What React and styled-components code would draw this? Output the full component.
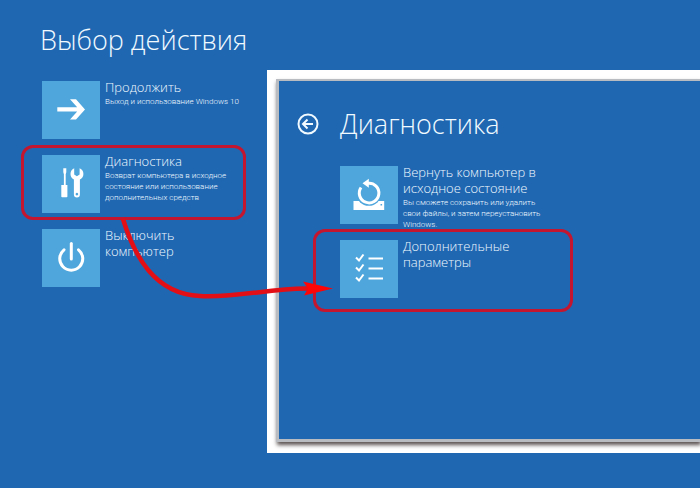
import React from 'react'
import styled, { createGlobalStyle } from 'styled-components'

const GlobalStyle = createGlobalStyle`
  * {
    box-sizing: border-box;
  }
  body {
    margin: 0;
    background: #2067b2;
    color: #f0faff;
    font-family: "Open Sans", "Noto Sans", sans-serif;
  }
`

const Page = styled.div`
  position: relative;
  display: flex;
  align-items: flex-start;
  min-height: 100vh;
  overflow: hidden;
`

const Actions = styled.main`
  flex: 0 0 267px;
  min-width: 0;
  padding: 20px 0 0 42px;
`

const Title = styled.h1`
  margin: 0 0 0 -2px;
  font-size: 27px;
  line-height: 40px;
  font-weight: 300;
  white-space: nowrap;
`

const Options = styled.div`
  display: flex;
  flex-direction: column;
  gap: 16px;
  margin-top: ${(props) => props.$top};
`

const Option = styled.button`
  position: relative;
  display: flex;
  align-items: flex-start;
  gap: 5px;
  width: 200px;
  height: 58px;
  padding: 0;
  border: 0;
  background: none;
  color: inherit;
  font-family: inherit;
  text-align: left;
  cursor: pointer;
`

const Tile = styled.span`
  flex: 0 0 58px;
  height: 58px;
  background: #4ea6dc;

  svg {
    display: block;
  }
`

const Text = styled.span`
  display: flex;
  flex-direction: column;
  margin-top: -2px;
  white-space: pre;
`

const Name = styled.span`
  font-size: 13px;
  line-height: 16px;
  font-weight: 300;
`

const Note = styled.span`
  margin-top: 1px;
  font-family: Roboto, "Open Sans", sans-serif;
  font-size: 8px;
  line-height: 11px;
  font-weight: 300;
`

const Frame = styled.span`
  position: absolute;
  inset: ${(props) => props.$inset};
  border: 3px solid #c4162e;
  border-radius: 12px;
  pointer-events: none;
`

const Sheet = styled.section`
  flex: 1;
  min-width: 0;
  margin-top: 70px;
  padding: 9px 0 11px 9px;
  background: #fff;
`

const Screen = styled.div`
  min-height: 363px;
  padding: 23px 0 0 18px;
  border: solid #b9bcc0;
  border-width: 2px 0 3px 3px;
  background: #2067b2;
  box-shadow: 1px 3px 4px #5a5050;
`

const Heading = styled.div`
  display: flex;
  align-items: center;
  gap: 23px;
`

const Back = styled.button`
  display: block;
  width: 22px;
  height: 22px;
  padding: 0;
  border: 0;
  background: none;
  color: inherit;
  cursor: pointer;

  svg {
    display: block;
  }
`

const Indent = styled.div`
  padding-left: 43px;
`

const Arrow = styled.svg`
  position: absolute;
  top: 0;
  left: 0;
  pointer-events: none;
`

const ContinueIcon = () => (
  <svg width="58" height="58" fill="#fff">
    <path d="M28 18.300h6L43 28.400L34 38.500H28L35.200 30.500H15.300V26.300H35.200z" />
  </svg>
)

const ToolsIcon = () => (
  <svg width="58" height="58" fill="#fff">
    <path d="M21.300 13.300h3v4l-.6 2V30h1.700v11.500q0 .8-.8.800h-4.500q-.8 0-.8-.8V30h2.600V19.300l-.6-2z" />
    <path
      fillRule="evenodd"
      d="M32.200 13.300v6.200l2.700 1.800l2.700-1.800v-6.200q3.800 1.700 3.800 5.700q0 3.600-3.500 5.500v15q0 3-3 3t-3-3v-15q-3.400-1.900-3.400-5.500q0-4 3.700-5.700zM34.900 37.800a1.300 1.300 0 1 0 .01 0z"
    />
  </svg>
)

const PowerIcon = () => (
  <svg width="58" height="58" fill="none" stroke="#fff" strokeWidth="3" strokeLinecap="round">
    <path d="M22 20.800A11.500 11.500 0 1 0 36.500 20.800" />
    <path d="M29.300 14.500V30" />
  </svg>
)

const ResetIcon = () => (
  <svg width="58" height="58">
    <path fillRule="evenodd" fill="#fff" d="M13.500 35H44.200V44H13.500zM40.500 38v1.600h1.600v-1.600z" />
    <circle cx="28.800" cy="27.300" r="12.500" fill="#4ea6dc" />
    <path d="M28 17.300A9.800 9.800 0 1 1 21 21.500" fill="none" stroke="#fff" strokeWidth="3" />
    <path d="M22.500 17.300L28.800 12.800V21.800z" fill="#fff" />
  </svg>
)

const ListIcon = () => (
  <svg width="58" height="58" fill="none" stroke="#fff" strokeWidth="2">
    {[18, 28, 38].map((y) => (
      <path key={y} d={`M16 ${y - 0.500}l3 3l4.500-6M28.500 ${y + 0.500}H43`} />
    ))}
  </svg>
)

const actions = [
  { name: 'Продолжить', note: 'Выход и использование Windows 10', Icon: ContinueIcon },
  {
    name: 'Диагностика',
    note: 'Возврат компьютера в исходное\nсостояние или использование\nдополнительных средств',
    Icon: ToolsIcon,
    frame: '-10px -4px -7px -21px',
  },
  { name: 'Выключить\nкомпьютер', Icon: PowerIcon },
]

const diagnostics = [
  {
    name: 'Вернуть компьютер в\nисходное состояние',
    note: 'Вы сможете сохранить или удалить\nсвои файлы, и затем переустановить\nWindows.',
    Icon: ResetIcon,
  },
  {
    name: 'Дополнительные\nпараметры',
    Icon: ListIcon,
    frame: '-11px -33px -14px -27px',
  },
]

const OptionList = ({ items, top }) => (
  <Options $top={top}>
    {items.map(({ name, note, Icon, frame }) => (
      <Option key={name} type="button">
        <Tile>
          <Icon />
        </Tile>
        <Text>
          <Name>{name}</Name>
          {note && <Note>{note}</Note>}
        </Text>
        {frame && <Frame $inset={frame} />}
      </Option>
    ))}
  </Options>
)

export default function App() {
  return (
    <>
      <GlobalStyle />
      <Page>
        <Actions>
          <Title>Выбор действия</Title>
          <OptionList items={actions} top="21px" />
        </Actions>

        <Sheet>
          <Screen>
            <Heading>
              <Back type="button" aria-label="Назад">
                <svg width="22" height="22" fill="none" stroke="currentColor" strokeWidth="2">
                  <circle cx="11" cy="11" r="9.500" />
                  <path d="M6.500 11H16M10.500 6.500L6 11L10.500 15.500" />
                </svg>
              </Back>
              <Title as="h2">Диагностика</Title>
            </Heading>
            <Indent>
              <OptionList items={diagnostics} top="22px" />
            </Indent>
          </Screen>
        </Sheet>

        <Arrow width="340" height="310">
          <path
            d="M123 219C134 255 154 294 200 296C238 298 270 288 308 288.500"
            fill="none"
            stroke="#e30f16"
            strokeWidth="4.500"
          />
          <path d="M303 281.500L333 288.500L304 295.500L308 288.500z" fill="#ff0508" />
        </Arrow>
      </Page>
    </>
  )
}
